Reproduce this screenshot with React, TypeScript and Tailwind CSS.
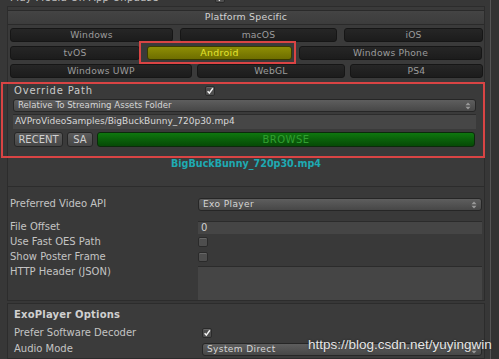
import React from "react"

function Check({ checked = false }: { checked?: boolean }) {
  return (
    <div className="w-[10px] h-[10px] rounded-[2px] bg-[#4e4e4e] border border-[#2a2a2a] shadow-[inset_0_1px_0_#666] flex items-center justify-center">
      {checked && (
        <svg width="10" height="10" viewBox="0 0 10 10">
          <path d="M2 5.2 L4.2 7.6 L8.6 1.6" fill="none" stroke="#f2f2f2" strokeWidth="1.8" />
        </svg>
      )}
    </div>
  )
}

function Updown() {
  return (
    <svg width="6" height="8" viewBox="0 0 6 8" className="mr-[4px]">
      <path d="M3 0.5 L5.5 3.2 L0.5 3.2 Z" fill="#9a9a9a" />
      <path d="M3 7.5 L5.5 4.8 L0.5 4.8 Z" fill="#9a9a9a" />
    </svg>
  )
}

function Dropdown({ text, small = false }: { text: string; small?: boolean }) {
  return (
    <div className="h-[13px] flex items-center justify-between rounded-[3px] border border-[#262626] bg-gradient-to-b from-[#5e5e5e] to-[#474747] text-[#d6d6d6]">
      <span className={`pl-[4px] ${small ? "text-[8.6px]" : "text-[9px] tracking-[0.4px]"}`}>{text}</span>
      <Updown />
    </div>
  )
}

function PlatBtn({ label, w, active = false }: { label: string; w: number; active?: boolean }) {
  if (active) {
    return (
      <div
        className="h-[14px] flex items-center justify-center rounded-[3px] border border-[#3a3a00] bg-gradient-to-b from-[#8e8e06] to-[#6e6e00] text-[#e4e430] text-[9.4px] tracking-[0.3px]"
        style={{ width: w }}
      >
        {label}
      </div>
    )
  }
  return (
    <div
      className="h-[14px] flex items-center justify-center rounded-[3px] border border-[#161616] bg-gradient-to-b from-[#262626] to-[#1c1c1c] text-[#9c9c9c] text-[9.2px] tracking-[0.2px]"
      style={{ width: w }}
    >
      {label}
    </div>
  )
}

function Row({ label, children, h = 12 }: { label: string; children?: React.ReactNode; h?: number }) {
  return (
    <div className="flex items-start" style={{ height: h }}>
      <div className="w-[188px] leading-[12px]">{label}</div>
      <div className="flex-1">{children}</div>
    </div>
  )
}

export default function App() {
  return (
    <div className="w-[499px] h-[359px] overflow-hidden bg-[#373737] relative flex font-['DejaVu_Sans',sans-serif] text-[10px] text-[#c4c4c4]">
      <div className="w-[490px] flex flex-col">
        {/* cut-off top row */}
        <div className="h-[6px] overflow-hidden">
          <div className="flex items-start pl-[10px] -mt-[7px]">
            <div className="w-[205px] leading-[10px] tracking-[0.3px]">Play Media On App Unpause</div>
            <div className="mt-[0px]"><Check checked /></div>
          </div>
        </div>

        {/* platform box */}
        <div className="ml-[7px] w-[478px] h-[181px] border border-[#2c2c2c] bg-[#3a3a3a] flex flex-col">
          <div className="mt-[3px] h-[15px] border-y border-[#2a2a2a] bg-gradient-to-b from-[#444] to-[#3c3c3c] flex items-center justify-center text-[#d2d2d2] text-[9.4px] tracking-[0.2px]">
            Platform Specific
          </div>
          <div className="mt-[3px] ml-[2px] flex flex-col gap-[4px]">
            <div className="flex gap-[7px]">
              <PlatBtn label="Windows" w={163} />
              <PlatBtn label="macOS" w={157} />
              <PlatBtn label="iOS" w={139} />
            </div>
            <div className="flex gap-[7px]">
              <PlatBtn label="tvOS" w={130} />
              <PlatBtn label="Android" w={145} active />
              <PlatBtn label="Windows Phone" w={183} />
            </div>
            <div className="flex gap-[5px]">
              <PlatBtn label="Windows UWP" w={182} />
              <PlatBtn label="WebGL" w={148} />
              <PlatBtn label="PS4" w={133} />
            </div>
          </div>

          {/* path section */}
          <div className="mt-[6px] -ml-[6px] w-[478px] flex flex-col pl-[11px] pr-[4px]">
            <div className="h-[13px] flex items-center">
              <div className="w-[192px] pl-[1px] tracking-[0.8px] text-[#cacaca]">Override Path</div>
              <Check checked />
            </div>
            <div className="mt-[2px]">
              <Dropdown text="Relative To Streaming Assets Folder" small />
            </div>
            <div className="mt-[2px] h-[15px] border-t border-[#2c2c2c] bg-[#464646] flex items-center pl-[2px] text-[#d8d8d8] text-[9px]">
              AVProVideoSamples/BigBuckBunny_720p30.mp4
            </div>
            <div className="mt-[3px] h-[15px] flex gap-[4px] pl-[1px]">
              <div className="w-[49px] flex items-center justify-center rounded-[3px] border border-[#262626] bg-gradient-to-b from-[#5c5c5c] to-[#464646] text-[#d0d0d0]">RECENT</div>
              <div className="w-[26px] flex items-center justify-center rounded-[3px] border border-[#262626] bg-gradient-to-b from-[#5c5c5c] to-[#464646] text-[#d0d0d0]">SA</div>
              <div className="flex-1 mr-[1px] flex items-center justify-center rounded-[3px] border border-[#0c2a0c] bg-gradient-to-b from-[#0f780f] to-[#064a06] text-[#32a032] tracking-[0.5px]">BROWSE</div>
            </div>
          </div>
          <div className="mt-[11px] text-center font-bold text-[#1eaab2] text-[9.6px] leading-[12px]">
            BigBuckBunny_720p30.mp4
          </div>
        </div>

        {/* playback box */}
        <div className="ml-[7px] w-[478px] h-[114px] border-x border-b border-[#2c2c2c] bg-[#393939] flex flex-col pl-[2px] pr-[2px]">
          <div className="mt-[11px]">
            <Row label="Preferred Video API" h={13}>
              <Dropdown text="Exo Player" />
            </Row>
          </div>
          <div className="mt-[10px] flex flex-col gap-[3px]">
            <Row label="File Offset">
              <div className="h-[13px] border-t border-[#2b2b2b] bg-[#454545] pl-[3px] leading-[12px] text-[#d0d0d0]">0</div>
            </Row>
            <Row label="Use Fast OES Path">
              <div className="mt-[1px]"><Check /></div>
            </Row>
            <Row label="Show Poster Frame">
              <div className="mt-[1px]"><Check /></div>
            </Row>
            <Row label="HTTP Header (JSON)" h={34}>
              <div className="h-[34px] border-t border-[#2b2b2b] bg-[#454545]" />
            </Row>
          </div>
        </div>

        {/* exoplayer options box */}
        <div className="mt-[2px] ml-[7px] w-[478px] flex-1 border border-[#2c2c2c] bg-[#3b3b3b] flex flex-col pl-[6px] pr-[2px]">
          <div className="mt-[5px] h-[12px] font-bold text-[#d0d0d0] tracking-[0.2px] leading-[12px]">ExoPlayer Options</div>
          <div className="mt-[6px] flex flex-col gap-[4px]">
            <Row label="Prefer Software Decoder">
              <div className="mt-[1px]"><Check checked /></div>
            </Row>
            <Row label="Audio Mode" h={13}>
              <Dropdown text="System Direct" />
            </Row>
          </div>
        </div>
      </div>

      {/* scrollbar */}
      <div className="w-[9px] border-l border-[#555] bg-[#323232]" />

      {/* annotation boxes */}
      <div className="absolute left-[139px] top-[41px] w-[157px] h-[23px] border-2 border-[#d94444]" />
      <div className="absolute left-[1px] top-[82px] w-[484px] h-[76px] border-2 border-[#d94444]" />

      {/* watermark */}
      <div className="absolute left-[308px] top-[335px] font-['Liberation_Sans',sans-serif] text-[13.5px] text-[#e6e6e6] [text-shadow:0_0_2px_#222]">
        https://blog.csdn.net/yuyingwin
      </div>
    </div>
  )
}
